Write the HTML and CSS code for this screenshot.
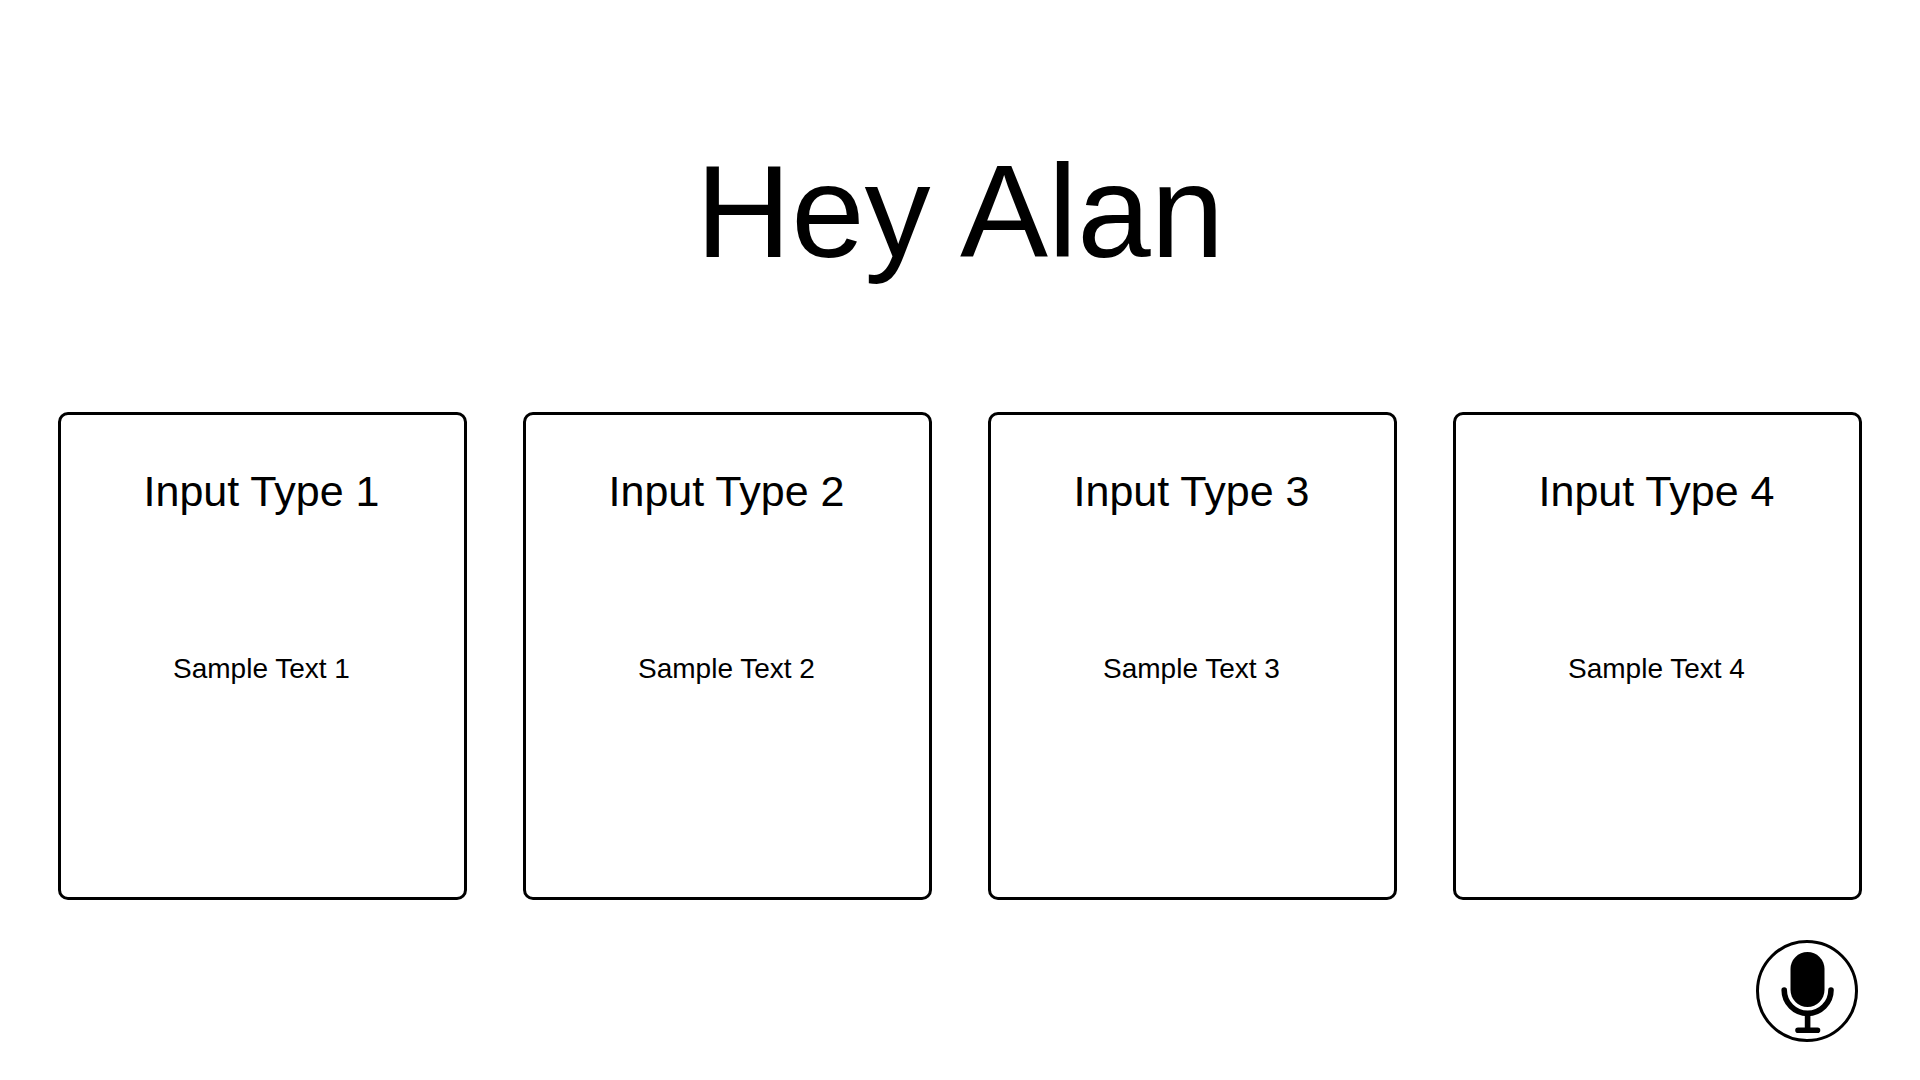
FILE: index.html
```html
<!DOCTYPE html>
<html lang="en">
<head>
<meta charset="utf-8">
<title>Hey Alan</title>
<link rel="stylesheet" href="styles.css">
</head>
<body>
<main class="page">
  <h1 class="title">Hey Alan</h1>
  <section class="cards">
    <article class="card"><h2 class="card-title">Input Type 1</h2><p class="card-text">Sample Text 1</p></article>
    <article class="card"><h2 class="card-title">Input Type 2</h2><p class="card-text">Sample Text 2</p></article>
    <article class="card"><h2 class="card-title">Input Type 3</h2><p class="card-text">Sample Text 3</p></article>
    <article class="card"><h2 class="card-title">Input Type 4</h2><p class="card-text">Sample Text 4</p></article>
  </section>
  <footer class="actions">
    <button class="mic" type="button" aria-label="Speak">
      <svg class="mic-icon" viewBox="3 3 96 96" aria-hidden="true">
        <rect x="34.500" y="12" width="34" height="55" rx="17"/>
        <path d="M28.200 50a23.400 23.400 0 0 0 46.800 0M51.600 74v16M42 90.300h19.500" fill="none" stroke="#000" stroke-width="5.600" stroke-linecap="round"/>
      </svg>
    </button>
  </footer>
</main>
</body>
</html>
```
FILE: styles.css
```css
* {
  box-sizing: border-box;
}

body {
  margin: 0;
  background: #fff;
  color: #000;
  font-family: "Liberation Sans", Arial, sans-serif;
}

.page {
  padding: 132px 58px 0;
}

.title {
  margin: 0 0 120px;
  font-size: 132px;
  line-height: 160px;
  font-weight: 400;
  text-align: center;
}

.cards {
  display: grid;
  grid-template-columns: repeat(4, 1fr);
  gap: 56px;
}

.card {
  min-height: 488px;
  padding: 52px 26px 52px 24px;
  border: 3px solid #000;
  border-radius: 10px;
  text-align: center;
}

.card-title {
  margin: 0 0 138px;
  font-size: 43px;
  line-height: 48px;
  font-weight: 400;
}

.card-text {
  margin: 0;
  font-size: 28px;
  line-height: 32px;
}

.actions {
  display: flex;
  justify-content: flex-end;
  padding: 40px 4px 0;
}

.mic {
  width: 102px;
  height: 102px;
  padding: 0;
  border: 3px solid #000;
  border-radius: 50%;
  background: #fff;
  color: #000;
}

.mic-icon {
  display: block;
  width: 100%;
}
```
